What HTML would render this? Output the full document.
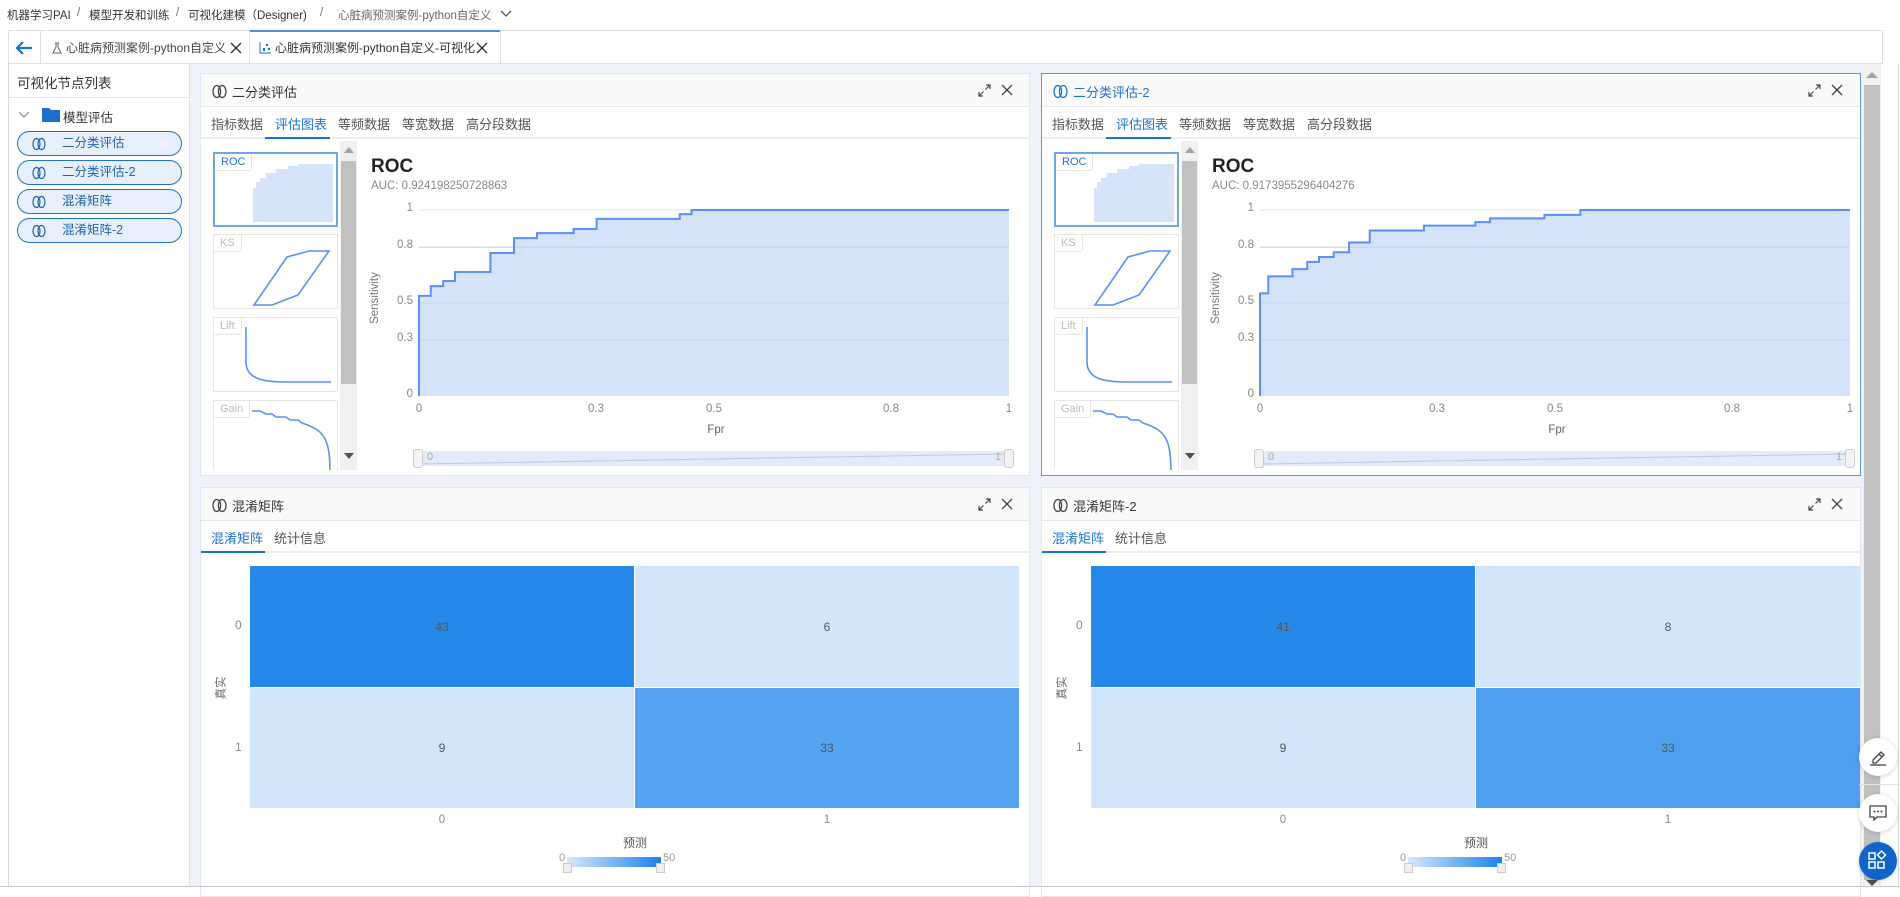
<!DOCTYPE html>
<html><head><meta charset="utf-8">
<style>
*{box-sizing:border-box;margin:0;padding:0}
body{width:1900px;height:887px;overflow:hidden;background:#fff;font-family:"Liberation Sans","Noto Sans CJK SC",sans-serif;color:#333;position:relative}
.a{position:absolute}
.t{position:absolute;white-space:nowrap}
.bc{font-size:11.5px;top:7px;color:#333}
.panel{position:absolute;background:#fff;border:1px solid #e3e6ee}
.ph{position:absolute;left:0;right:0;top:0;height:33px;background:#fafafa;border-bottom:1px solid #e8e8e8}
.ptabs{position:absolute;left:0;right:0;top:33px;height:32px;border-bottom:2px solid #eee}
.ptab{position:absolute;top:7px;font-size:13px;color:#555}
.ptab.on{color:#1a73d0}
.uline{position:absolute;bottom:-2px;height:2px;background:#1a73d0}
.pill{position:absolute;left:17px;width:165px;height:25px;border:1.5px solid #1e73c8;border-radius:13px;background:#e6effa;font-size:12.5px;color:#1e63b0;padding-left:44px;line-height:22px}
.pill svg{position:absolute;left:14px;top:5px}
.thumb{position:absolute;left:12px;width:125px;height:75px;border:1px solid #e6e6e6;background:#fff;overflow:hidden}
.thumb .lb{position:absolute;left:0;top:0;padding:2px 6px;font-size:11px;color:#bbb;border-right:1px solid #e6e6e6;border-bottom:1px solid #e6e6e6;border-bottom-right-radius:3px}
.yl{position:absolute;font-size:11.5px;color:#888;text-align:right;width:30px}
.xl{position:absolute;font-size:11.5px;color:#888;transform:translateX(-50%)}
.cell{position:absolute;display:flex;align-items:center;justify-content:center;font-size:12px;color:#555}
.fb{position:absolute;width:38px;height:38px;border-radius:50%;background:#fff;box-shadow:0 1px 5px rgba(0,0,0,.18);display:flex;align-items:center;justify-content:center}
.zs{position:absolute;font-size:11.5px;color:#666;transform:rotate(-90deg);white-space:nowrap}
</style></head><body>

<!-- breadcrumb -->
<div class="t bc" style="left:7px">机器学习PAI</div>
<div class="t bc" style="left:77px;color:#666">/</div>
<div class="t bc" style="left:89px">模型开发和训练</div>
<div class="t bc" style="left:176px;color:#666">/</div>
<div class="t bc" style="left:188px">可视化建模（Designer)</div>
<div class="t bc" style="left:320px;color:#666">/</div>
<div class="t bc" style="left:338px;color:#666">心脏病预测案例-python自定义</div>
<svg class="a" style="left:500px;top:10px" width="12" height="8"><path d="M1 1l5 5 5-5" stroke="#555" fill="none" stroke-width="1.3"/></svg>

<!-- tab bar -->
<div class="a" style="left:8px;top:30px;width:1875px;height:34px;border:1px solid #dde0e6;background:#fff"></div>
<svg class="a" style="left:14px;top:40px" width="20" height="16"><path d="M18 8H3M9 2L3 8l6 6" stroke="#1a73d0" stroke-width="2.2" fill="none"/></svg>
<div class="a" style="left:40px;top:31px;width:1px;height:32px;background:#dde0e6"></div>
<svg class="a" style="left:52px;top:42px" width="10" height="12"><path d="M3 1h4M4 1v4L1 11h8L6 5V1" stroke="#666" fill="none"/></svg>
<div class="t" style="left:66px;top:39px;font-size:12px;color:#444">心脏病预测案例-python自定义</div>
<svg class="a" style="left:230px;top:42px" width="12" height="12"><path d="M1 1l10 10M11 1L1 11" stroke="#333" stroke-width="1.4"/></svg>
<div class="a" style="left:249px;top:31px;width:1px;height:32px;background:#dde0e6"></div>
<div class="a" style="left:250px;top:30px;width:250px;height:2px;background:#4d8fd8"></div>
<svg class="a" style="left:259px;top:41px" width="13" height="13"><path d="M1 1v11h11" stroke="#1a73d0" fill="none"/><rect x="4" y="7" width="2" height="3" fill="#1a73d0"/><rect x="7" y="3" width="2" height="2" fill="#1a73d0"/><rect x="9" y="7" width="2" height="2" fill="#1a73d0"/></svg>
<div class="t" style="left:275px;top:39px;font-size:12px;color:#333">心脏病预测案例-python自定义-可视化</div>
<svg class="a" style="left:476px;top:42px" width="12" height="12"><path d="M1 1l10 10M11 1L1 11" stroke="#333" stroke-width="1.4"/></svg>
<div class="a" style="left:500px;top:31px;width:1px;height:32px;background:#dde0e6"></div>

<!-- outer frame -->
<div class="a" style="left:8px;top:63px;width:1891px;height:824px;border:1px solid #d6d9e0;border-top:none"></div>
<!-- sidebar -->
<div class="a" style="left:189px;top:63px;width:1px;height:823px;background:#dde0e6"></div>
<div class="t" style="left:17px;top:72px;font-size:13.5px;color:#333">可视化节点列表</div>
<div class="a" style="left:9px;top:97px;width:180px;height:1px;background:#e3e6ec"></div>
<svg class="a" style="left:18px;top:111px" width="12" height="8"><path d="M1 1l5 5 5-5" stroke="#888" fill="none" stroke-width="1.2"/></svg>
<svg class="a" style="left:42px;top:107px" width="18" height="15"><path d="M0 1h7l2 2h9v12H0z" fill="#1a6fcf"/></svg>
<div class="t" style="left:63px;top:107px;font-size:12.5px;color:#333">模型评估</div>
<div class="pill" style="top:131px"><svg width="14" height="14"><ellipse cx="4.5" cy="7" rx="3.5" ry="5.5" stroke="#1e63b0" fill="none" stroke-width="1.2"/><ellipse cx="9.5" cy="7" rx="3.5" ry="5.5" stroke="#1e63b0" fill="none" stroke-width="1.2"/></svg>二分类评估</div>
<div class="pill" style="top:160px"><svg width="14" height="14"><ellipse cx="4.5" cy="7" rx="3.5" ry="5.5" stroke="#1e63b0" fill="none" stroke-width="1.2"/><ellipse cx="9.5" cy="7" rx="3.5" ry="5.5" stroke="#1e63b0" fill="none" stroke-width="1.2"/></svg>二分类评估-2</div>
<div class="pill" style="top:189px"><svg width="14" height="14"><ellipse cx="4.5" cy="7" rx="3.5" ry="5.5" stroke="#1e63b0" fill="none" stroke-width="1.2"/><ellipse cx="9.5" cy="7" rx="3.5" ry="5.5" stroke="#1e63b0" fill="none" stroke-width="1.2"/></svg>混淆矩阵</div>
<div class="pill" style="top:218px"><svg width="14" height="14"><ellipse cx="4.5" cy="7" rx="3.5" ry="5.5" stroke="#1e63b0" fill="none" stroke-width="1.2"/><ellipse cx="9.5" cy="7" rx="3.5" ry="5.5" stroke="#1e63b0" fill="none" stroke-width="1.2"/></svg>混淆矩阵-2</div>

<!-- main bg -->
<div class="a" style="left:190px;top:64px;width:1673px;height:822px;background:#eff2fa"></div>
<!-- right scrollbar -->
<div class="a" style="left:1863px;top:64px;width:18px;height:822px;background:#f1f1f1"></div>
<div class="a" style="left:1864px;top:85px;width:16px;height:795px;background:#c1c1c1"></div>
<svg class="a" style="left:1866px;top:71px" width="12" height="8"><path d="M0 7L6 1l6 6z" fill="#a3a3a3"/></svg>
<svg class="a" style="left:1866px;top:880px" width="12" height="7"><path d="M0 0h12L6 6z" fill="#505050"/></svg>

<!-- P1 -->
<div class="panel" style="left:200px;top:73px;width:830px;height:403px">
 <div class="ph">
  <svg class="a" style="left:11px;top:10px" width="15" height="15"><ellipse cx="4.8" cy="7.5" rx="3.8" ry="6" stroke="#444" fill="none" stroke-width="1.3"/><ellipse cx="10.2" cy="7.5" rx="3.8" ry="6" stroke="#444" fill="none" stroke-width="1.3"/></svg>
  <div class="t" style="left:31px;top:8px;font-size:13px">二分类评估</div>
  <svg class="a" style="left:777px;top:10px" width="13" height="13"><path d="M1 12l4.5-4.5M1 8v4h4M12 1L7.5 5.5M8 1h4v4" stroke="#444" fill="none" stroke-width="1.2"/></svg>
  <svg class="a" style="left:800px;top:10px" width="12" height="12"><path d="M1 1l10 10M11 1L1 11" stroke="#444" stroke-width="1.3"/></svg>
 </div>
 <div class="ptabs"><span class="ptab" style="left:10px">指标数据</span><span class="ptab on" style="left:74px">评估图表</span><span class="ptab" style="left:137px">等频数据</span><span class="ptab" style="left:201px">等宽数据</span><span class="ptab" style="left:265px">高分段数据</span><div class="uline" style="left:64px;width:65px"></div></div>
 <div class="a" style="left:0;top:67px;width:158px;height:329px;overflow:hidden">
  <div class="thumb" style="top:11px;border:2px solid #6ea6e6"><div class="lb" style="color:#1a73d0">ROC</div><svg class="a" style="left:38px;top:10px" width="80" height="58"><path d="M0 58V24h3v-6h4v-4h6v-5h10v-4h12V2h10V0h35v58z" fill="#d6e4fa"/></svg></div>
  <div class="thumb" style="top:93px"><div class="lb">KS</div><svg class="a" style="left:38px;top:14px" width="80" height="58"><path d="M2 56L35 8l22-6h20L46 46 20 56z" stroke="#5b8ff9" fill="none" stroke-width="1.6"/></svg></div>
  <div class="thumb" style="top:176px"><div class="lb">Lift</div><svg class="a" style="left:30px;top:8px" width="90" height="62"><path d="M2 1v35c0 18 20 20 40 20h45" stroke="#5b8ff9" fill="none" stroke-width="1.6"/></svg></div>
  <div class="thumb" style="top:259px;height:80px"><div class="lb">Gain</div><svg class="a" style="left:38px;top:8px" width="84" height="70"><path d="M0 2h8l6 3h6l4 3h10l4 3h8l4 3c12 4 20 8 24 18s4 22 4 40" stroke="#5b8ff9" fill="none" stroke-width="1.6"/></svg></div>
  <div class="a" style="left:139px;top:0;width:17px;height:329px;background:#f0f0f0"></div>
  <div class="a" style="left:140px;top:20px;width:15px;height:223px;background:#c1c1c1"></div>
  <svg class="a" style="left:143px;top:6px" width="10" height="6"><path d="M0 6L5 0l5 6z" fill="#a3a3a3"/></svg>
  <svg class="a" style="left:143px;top:312px" width="10" height="6"><path d="M0 0h10L5 6z" fill="#505050"/></svg>
 </div>
 <div class="t" style="left:170px;top:82px;font-size:19px;font-weight:bold;color:#222">ROC</div>
 <div class="t" style="left:170px;top:106px;font-size:11.5px;color:#888">AUC: 0.924198250728863</div>
 <div class="yl" style="left:182px;top:128px">1</div>
 <div class="yl" style="left:182px;top:165px">0.8</div>
 <div class="yl" style="left:182px;top:221px">0.5</div>
 <div class="yl" style="left:182px;top:258px">0.3</div>
 <div class="yl" style="left:182px;top:314px">0</div>
 <div class="t" style="left:148px;top:218px;font-size:11.5px;color:#777;transform:rotate(-90deg)">Sensitivity</div>
 <svg class="a" style="left:218px;top:136px;overflow:visible" width="590" height="186" viewBox="0 0 1000 1000" preserveAspectRatio="none">
  <path d="M0 0H1000M0 200H1000M0 500H1000M0 700H1000" stroke="#e6e6e6" stroke-width="1" vector-effect="non-scaling-stroke"/>
  <path d="M0 1000V462H20V409H41V382H61V333H121V231H161V151H200V124H262V102H301V48H442V22H462V0H1000V1000Z" fill="#d5e3fa"/>
  <path d="M0 200H1000M0 500H1000M0 700H1000" stroke="#c4d4ef" stroke-width="1" vector-effect="non-scaling-stroke"/>
  <path d="M0 1000V462H20V409H41V382H61V333H121V231H161V151H200V124H262V102H301V48H442V22H462V0H1000" fill="none" stroke="#5b8ff9" stroke-width="2" vector-effect="non-scaling-stroke"/>
 </svg>
 <div class="xl" style="left:218px;top:329px">0</div><div class="xl" style="left:395px;top:329px">0.3</div><div class="xl" style="left:513px;top:329px">0.5</div><div class="xl" style="left:690px;top:329px">0.8</div><div class="xl" style="left:808px;top:329px">1</div>
 <div class="xl" style="left:515px;top:350px;color:#666">Fpr</div>
 <div class="a" style="left:218px;top:377px;width:590px;height:15px;background:#e3eaf8"></div>
 <svg class="a" style="left:218px;top:377px" width="590" height="15"><path d="M0 13L590 3" stroke="#c0cbe0"/></svg>
 <div class="a" style="left:212px;top:375px;width:10px;height:19px;border:1px solid #ccc;border-radius:3px;background:#f3f3f3"></div>
 <div class="a" style="left:803px;top:375px;width:10px;height:19px;border:1px solid #ccc;border-radius:3px;background:#f3f3f3"></div>
 <div class="t" style="left:226px;top:377px;font-size:11px;color:#aaa">0</div>
 <div class="t" style="left:794px;top:377px;font-size:11px;color:#aaa">1</div>
</div>

<!-- P2 -->
<div class="panel" style="left:1041px;top:73px;width:820px;height:403px;border:1px solid #5a9be0">
 <div class="ph">
  <svg class="a" style="left:11px;top:10px" width="15" height="15"><ellipse cx="4.8" cy="7.5" rx="3.8" ry="6" stroke="#1a73d0" fill="none" stroke-width="1.3"/><ellipse cx="10.2" cy="7.5" rx="3.8" ry="6" stroke="#1a73d0" fill="none" stroke-width="1.3"/></svg>
  <div class="t" style="left:31px;top:8px;font-size:13px;color:#1a73d0">二分类评估-2</div>
  <svg class="a" style="left:766px;top:10px" width="13" height="13"><path d="M1 12l4.5-4.5M1 8v4h4M12 1L7.5 5.5M8 1h4v4" stroke="#444" fill="none" stroke-width="1.2"/></svg>
  <svg class="a" style="left:789px;top:10px" width="12" height="12"><path d="M1 1l10 10M11 1L1 11" stroke="#444" stroke-width="1.3"/></svg>
 </div>
 <div class="ptabs"><span class="ptab" style="left:10px">指标数据</span><span class="ptab on" style="left:74px">评估图表</span><span class="ptab" style="left:137px">等频数据</span><span class="ptab" style="left:201px">等宽数据</span><span class="ptab" style="left:265px">高分段数据</span><div class="uline" style="left:64px;width:65px"></div></div>
 <div class="a" style="left:0;top:67px;width:158px;height:329px;overflow:hidden">
  <div class="thumb" style="top:11px;border:2px solid #6ea6e6"><div class="lb" style="color:#1a73d0">ROC</div><svg class="a" style="left:38px;top:10px" width="80" height="58"><path d="M0 58V24h3v-6h4v-4h6v-5h10v-4h12V2h10V0h35v58z" fill="#d6e4fa"/></svg></div>
  <div class="thumb" style="top:93px"><div class="lb">KS</div><svg class="a" style="left:38px;top:14px" width="80" height="58"><path d="M2 56L35 8l22-6h20L46 46 20 56z" stroke="#5b8ff9" fill="none" stroke-width="1.6"/></svg></div>
  <div class="thumb" style="top:176px"><div class="lb">Lift</div><svg class="a" style="left:30px;top:8px" width="90" height="62"><path d="M2 1v35c0 18 20 20 40 20h45" stroke="#5b8ff9" fill="none" stroke-width="1.6"/></svg></div>
  <div class="thumb" style="top:259px;height:80px"><div class="lb">Gain</div><svg class="a" style="left:38px;top:8px" width="84" height="70"><path d="M0 2h8l6 3h6l4 3h10l4 3h8l4 3c12 4 20 8 24 18s4 22 4 40" stroke="#5b8ff9" fill="none" stroke-width="1.6"/></svg></div>
  <div class="a" style="left:139px;top:0;width:17px;height:329px;background:#f0f0f0"></div>
  <div class="a" style="left:140px;top:20px;width:15px;height:223px;background:#c1c1c1"></div>
  <svg class="a" style="left:143px;top:6px" width="10" height="6"><path d="M0 6L5 0l5 6z" fill="#a3a3a3"/></svg>
  <svg class="a" style="left:143px;top:312px" width="10" height="6"><path d="M0 0h10L5 6z" fill="#505050"/></svg>
 </div>
 <div class="t" style="left:170px;top:82px;font-size:19px;font-weight:bold;color:#222">ROC</div>
 <div class="t" style="left:170px;top:106px;font-size:11.5px;color:#888">AUC: 0.9173955296404276</div>
 <div class="yl" style="left:182px;top:128px">1</div>
 <div class="yl" style="left:182px;top:165px">0.8</div>
 <div class="yl" style="left:182px;top:221px">0.5</div>
 <div class="yl" style="left:182px;top:258px">0.3</div>
 <div class="yl" style="left:182px;top:314px">0</div>
 <div class="t" style="left:148px;top:218px;font-size:11.5px;color:#777;transform:rotate(-90deg)">Sensitivity</div>
 <svg class="a" style="left:218px;top:136px;overflow:visible" width="590" height="186" viewBox="0 0 1000 1000" preserveAspectRatio="none">
  <path d="M0 0H1000M0 200H1000M0 500H1000M0 700H1000" stroke="#e6e6e6" stroke-width="1" vector-effect="non-scaling-stroke"/>
  <path d="M0 1000V448H14V357H55V318H80V279H100V253H125V227H151V175H186V110H278V84H365V65H390V45H482V26H543V0H1000V1000Z" fill="#d5e3fa"/>
  <path d="M0 200H1000M0 500H1000M0 700H1000" stroke="#c4d4ef" stroke-width="1" vector-effect="non-scaling-stroke"/>
  <path d="M0 1000V448H14V357H55V318H80V279H100V253H125V227H151V175H186V110H278V84H365V65H390V45H482V26H543V0H1000" fill="none" stroke="#5b8ff9" stroke-width="2" vector-effect="non-scaling-stroke"/>
 </svg>
 <div class="xl" style="left:218px;top:329px">0</div><div class="xl" style="left:395px;top:329px">0.3</div><div class="xl" style="left:513px;top:329px">0.5</div><div class="xl" style="left:690px;top:329px">0.8</div><div class="xl" style="left:808px;top:329px">1</div>
 <div class="xl" style="left:515px;top:350px;color:#666">Fpr</div>
 <div class="a" style="left:218px;top:377px;width:590px;height:15px;background:#e3eaf8"></div>
 <svg class="a" style="left:218px;top:377px" width="590" height="15"><path d="M0 13L590 3" stroke="#c0cbe0"/></svg>
 <div class="a" style="left:212px;top:375px;width:10px;height:19px;border:1px solid #ccc;border-radius:3px;background:#f3f3f3"></div>
 <div class="a" style="left:803px;top:375px;width:10px;height:19px;border:1px solid #ccc;border-radius:3px;background:#f3f3f3"></div>
 <div class="t" style="left:226px;top:377px;font-size:11px;color:#aaa">0</div>
 <div class="t" style="left:794px;top:377px;font-size:11px;color:#aaa">1</div>
</div>

<!-- P3 -->
<div class="panel" style="left:200px;top:487px;width:830px;height:410px">
 <div class="ph">
  <svg class="a" style="left:11px;top:10px" width="15" height="15"><ellipse cx="4.8" cy="7.5" rx="3.8" ry="6" stroke="#444" fill="none" stroke-width="1.3"/><ellipse cx="10.2" cy="7.5" rx="3.8" ry="6" stroke="#444" fill="none" stroke-width="1.3"/></svg>
  <div class="t" style="left:31px;top:8px;font-size:13px">混淆矩阵</div>
  <svg class="a" style="left:777px;top:10px" width="13" height="13"><path d="M1 12l4.5-4.5M1 8v4h4M12 1L7.5 5.5M8 1h4v4" stroke="#444" fill="none" stroke-width="1.2"/></svg>
  <svg class="a" style="left:800px;top:10px" width="12" height="12"><path d="M1 1l10 10M11 1L1 11" stroke="#444" stroke-width="1.3"/></svg>
 </div>
 <div class="ptabs"><span class="ptab on" style="left:10px">混淆矩阵</span><span class="ptab" style="left:73px">统计信息</span><div class="uline" style="left:0;width:64px"></div></div>
 <div class="cell" style="left:49px;top:78px;width:384px;height:121px;background:#2589ec">43</div>
 <div class="cell" style="left:434px;top:78px;width:384px;height:121px;background:#d2e6fb">6</div>
 <div class="cell" style="left:49px;top:200px;width:384px;height:120px;background:#d2e6fb">9</div>
 <div class="cell" style="left:434px;top:200px;width:384px;height:120px;background:#55a4f2">33</div>
 <div class="t" style="left:34px;top:130px;font-size:12px;color:#888">0</div>
 <div class="t" style="left:34px;top:252px;font-size:12px;color:#888">1</div>
 <div class="zs" style="left:8px;top:192px">真实</div>
 <div class="xl" style="left:241px;top:326px">0</div><div class="xl" style="left:626px;top:326px">1</div>
 <div class="t" style="left:422px;top:346px;font-size:12px;color:#555">预测</div>
 <div class="a" style="left:366px;top:369px;width:94px;height:10px;background:linear-gradient(90deg,#d8e8fb,#1a82ee)"></div>
 <div class="t" style="left:358px;top:364px;font-size:11px;color:#999">0</div>
 <div class="t" style="left:462px;top:364px;font-size:11px;color:#999">50</div>
 <div class="a" style="left:362px;top:375px;width:9px;height:10px;background:#eee;border:1px solid #ccc"></div>
 <div class="a" style="left:455px;top:375px;width:9px;height:10px;background:#eee;border:1px solid #ccc"></div>
</div>

<!-- P4 -->
<div class="panel" style="left:1041px;top:487px;width:820px;height:410px">
 <div class="ph">
  <svg class="a" style="left:11px;top:10px" width="15" height="15"><ellipse cx="4.8" cy="7.5" rx="3.8" ry="6" stroke="#444" fill="none" stroke-width="1.3"/><ellipse cx="10.2" cy="7.5" rx="3.8" ry="6" stroke="#444" fill="none" stroke-width="1.3"/></svg>
  <div class="t" style="left:31px;top:8px;font-size:13px">混淆矩阵-2</div>
  <svg class="a" style="left:766px;top:10px" width="13" height="13"><path d="M1 12l4.5-4.5M1 8v4h4M12 1L7.5 5.5M8 1h4v4" stroke="#444" fill="none" stroke-width="1.2"/></svg>
  <svg class="a" style="left:789px;top:10px" width="12" height="12"><path d="M1 1l10 10M11 1L1 11" stroke="#444" stroke-width="1.3"/></svg>
 </div>
 <div class="ptabs"><span class="ptab on" style="left:10px">混淆矩阵</span><span class="ptab" style="left:73px">统计信息</span><div class="uline" style="left:0;width:64px"></div></div>
 <div class="cell" style="left:49px;top:78px;width:384px;height:121px;background:#2589ec">41</div>
 <div class="cell" style="left:434px;top:78px;width:384px;height:121px;background:#d2e6fb">8</div>
 <div class="cell" style="left:49px;top:200px;width:384px;height:120px;background:#d2e6fb">9</div>
 <div class="cell" style="left:434px;top:200px;width:384px;height:120px;background:#4e9ff0">33</div>
 <div class="t" style="left:34px;top:130px;font-size:12px;color:#888">0</div>
 <div class="t" style="left:34px;top:252px;font-size:12px;color:#888">1</div>
 <div class="zs" style="left:8px;top:192px">真实</div>
 <div class="xl" style="left:241px;top:326px">0</div><div class="xl" style="left:626px;top:326px">1</div>
 <div class="t" style="left:422px;top:346px;font-size:12px;color:#555">预测</div>
 <div class="a" style="left:366px;top:369px;width:94px;height:10px;background:linear-gradient(90deg,#d8e8fb,#1a82ee)"></div>
 <div class="t" style="left:358px;top:364px;font-size:11px;color:#999">0</div>
 <div class="t" style="left:462px;top:364px;font-size:11px;color:#999">50</div>
 <div class="a" style="left:362px;top:375px;width:9px;height:10px;background:#eee;border:1px solid #ccc"></div>
 <div class="a" style="left:455px;top:375px;width:9px;height:10px;background:#eee;border:1px solid #ccc"></div>
</div>

<!-- bottom frame line -->
<div class="a" style="left:0;top:886px;width:1900px;height:1px;background:#c8c8c8"></div>

<!-- floating buttons -->
<div class="fb" style="left:1859px;top:738px"><svg width="20" height="20"><path d="M5 13l8-8 3 3-8 8H5zM11 7l3 3" stroke="#444" fill="none" stroke-width="1.3"/><path d="M2 18h16" stroke="#444" stroke-width="1.3"/></svg></div>
<div class="a" style="left:1859px;top:784px;width:41px;height:1px;background:#e3e3e3"></div>
<div class="fb" style="left:1859px;top:794px"><svg width="20" height="20"><path d="M2 3h16v11H9l-3 3v-3H2z" stroke="#444" fill="none" stroke-width="1.3"/><circle cx="6.5" cy="8.5" r="1" fill="#444"/><circle cx="10" cy="8.5" r="1" fill="#444"/><circle cx="13.5" cy="8.5" r="1" fill="#444"/></svg></div>
<div class="fb" style="left:1859px;top:842px;background:#0f65c9"><svg width="22" height="22"><rect x="2" y="3" width="6" height="6" stroke="#fff" fill="none" stroke-width="1.5"/><rect x="2" y="12" width="6" height="6" stroke="#fff" fill="none" stroke-width="1.5"/><rect x="11" y="12" width="6" height="6" stroke="#fff" fill="none" stroke-width="1.5"/><path d="M14.5 1l4 4-4 4-4-4z" stroke="#fff" fill="none" stroke-width="1.5"/></svg></div>

</body></html>
